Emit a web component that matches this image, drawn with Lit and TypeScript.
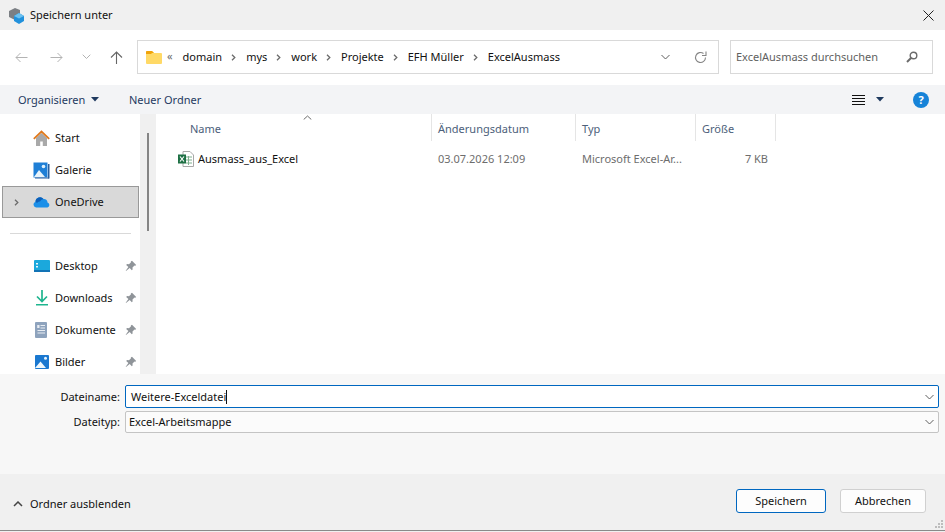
import { LitElement, html, css, svg } from "lit";
import { customElement } from "lit/decorators.js";

const pin = svg`<svg class="pin" width="12" height="12" viewBox="0 0 12 12"><path d="M7 .8l4.200 4.200-1 .7-.7-.2-2 2 .1 2-.8.8-2.100-2.300L1 11l-.3-.3 2.700-3.700L1.200 4.900l.8-.8 2 .1 2-2-.2-.7z" fill="#8f9499"/></svg>`;
const chev = svg`<svg width="9" height="9" viewBox="0 0 9 9"><path d="M3 1.800L5.800 4.500 3 7.200" fill="none" stroke="#6b6b6b" stroke-width="1.300"/></svg>`;
const down = svg`<svg width="9" height="6" viewBox="0 0 9 6"><path d="M.5 1l4 4 4-4" fill="none" stroke="#5f5f5f" stroke-width="1"/></svg>`;
const caret = svg`<svg width="8" height="5" viewBox="0 0 8 5"><path d="M0 0h8L4 4.500z" fill="#1f3a5f"/></svg>`;

const icons: Record<string, unknown> = {
  home: svg`<svg width="17" height="17" viewBox="0 0 17 17"><path d="M3 8v8h4.200v-4.500h2.600V16H14V8L8.500 3z" fill="#a9a9a9"/><path d="M.8 8.800L8.500 1.500l7.700 7.300" fill="none" stroke="#e0791c" stroke-width="1.800"/></svg>`,
  gal: svg`<svg width="17" height="17" viewBox="0 0 17 17"><rect x="0.500" y="0.500" width="14" height="15" fill="#1f7fd6"/><rect x="15" y="2" width="1.500" height="14.500" fill="#2a5f9e"/><rect x="2" y="15.500" width="14" height="1" fill="#2a5f9e"/><circle cx="10.500" cy="4.500" r="1.800" fill="#dff0fb"/><path d="M1 15l5-7 6 7z" fill="#e8f4fb"/></svg>`,
  cloud: svg`<svg width="17" height="12" viewBox="0 0 17 12"><path d="M3 11.500a3 3 0 0 1-.500-5.800A4.500 4.500 0 0 1 10.500 3a3.500 3.500 0 0 1 4 3.500 2.600 2.600 0 0 1 0 5z" fill="#1b8fe8"/><path d="M2.500 5.700A4.500 4.500 0 0 1 10.500 3 3.800 3.800 0 0 0 7 5.500 3 3 0 0 0 4 7z" fill="#0d5fb8"/></svg>`,
  desk: svg`<svg width="16" height="12" viewBox="0 0 16 12"><rect width="16" height="12" rx="1" fill="#1ba8dc"/><rect y="10" width="16" height="2" fill="#1273b5"/><rect x="2" y="3" width="2" height="1.500" fill="#e6f6fd"/><rect x="2" y="6" width="2" height="1.500" fill="#e6f6fd"/></svg>`,
  dl: svg`<svg width="14" height="16" viewBox="0 0 14 16"><path d="M7 0v11M2 6.500l5 5 5-5" fill="none" stroke="#1fb58f" stroke-width="1.700"/><rect x="1" y="14" width="12" height="1.500" fill="#1fb58f"/></svg>`,
  doc: svg`<svg width="13" height="16" viewBox="0 0 13 16"><rect width="12" height="16" rx="1" fill="#8ea3bd"/><path d="M5.500 3.500h4.500M5.500 6h4.500M2.500 8.500h7.500M2.500 11h7.500" stroke="#e8edf3" stroke-width="1"/><rect x="2.200" y="3" width="2.300" height="3" fill="#e8edf3"/></svg>`,
  pic: svg`<svg width="14" height="14" viewBox="0 0 14 14"><rect width="14" height="14" rx="1" fill="#1a78d0"/><circle cx="10.500" cy="3.200" r="1.500" fill="#e6f3fc"/><path d="M0 13l5.500-6.500L11 13z" fill="#eef7fc"/></svg>`,
};

const nav = [
  ["home", "Start"],
  ["gal", "Galerie"],
  ["cloud", "OneDrive"],
];
const quick = [
  ["desk", "Desktop"],
  ["dl", "Downloads"],
  ["doc", "Dokumente"],
  ["pic", "Bilder"],
];
const crumbs = ["domain", "mys", "work", "Projekte", "EFH Müller", "ExcelAusmass"];

@customElement("app-root")
export class AppRoot extends LitElement {
  static styles = css`
    :host {
      display: flex;
      flex-direction: column;
      width: 945px;
      height: 532px;
      overflow: hidden;
      background: #f0f0f0;
      font: 11px/16px "Noto Sans", sans-serif;
      color: #111;
      box-sizing: border-box;
    }
    svg { display: block; flex: none; }
    .title {
      height: 30px;
      flex: none;
      display: flex;
      align-items: center;
      background: #f0f0f0;
      padding: 0 11px 0 8px;
      gap: 5px;
    }
    .title .t { flex: 1; }
    .nav {
      height: 55px;
      flex: none;
      background: #fff;
      display: flex;
      align-items: center;
      padding: 0 13px 1px 15px;
      box-sizing: border-box;
    }
    .arrows {
      display: flex;
      align-items: center;
      width: 122px;
      flex: none;
    }
    .arrows .b1 { width: 35px; }
    .arrows .b2 { width: 32px; }
    .arrows .b3 { width: 28px; }
    .addr {
      flex: none;
      width: 582px;
      height: 34px;
      box-sizing: border-box;
      border: 1px solid #d9d9d9;
      display: flex;
      align-items: center;
      padding: 0 11px 0 8px;
      margin-right: 11px;
    }
    .crumbs { flex: 1; display: flex; align-items: center; }
    .crumbs .sep { margin: 0 8px 0 7px; }
    .lead { color: #6b6b6b; font-size: 11px; margin: -2px 11px 0 5px; letter-spacing: -1px; }
    .addr .refresh { margin-left: 24px; }
    .search {
      flex: none;
      width: 203px;
      height: 34px;
      box-sizing: border-box;
      border: 1px solid #d9d9d9;
      display: flex;
      align-items: center;
      justify-content: space-between;
      padding: 0 14px 0 5px;
      color: #5f5f5f;
    }
    .tools {
      height: 29px;
      flex: none;
      background: #f3f4f6;
      display: flex;
      align-items: center;
      padding: 0 16px 0 18px;
      color: #1f3a5f;
    }
    .org { display: flex; align-items: center; gap: 6px; width: 111px; }
    .tools .sp { flex: 1; }
    .views { display: flex; align-items: center; gap: 11px; margin-right: 29px; }
    .main {
      height: 260px;
      flex: none;
      display: flex;
      background: #fff;
      overflow: hidden;
    }
    .side {
      width: 140px;
      flex: none;
      padding: 8px 0 0 2px;
      box-sizing: border-box;
      overflow: hidden;
    }
    .item {
      height: 32px;
      width: 137px;
      box-sizing: border-box;
      display: flex;
      align-items: center;
      border: 1px solid transparent;
      padding-left: 30px;
      position: relative;
    }
    .item.sel { background: #d9d9d9; border-color: #999; padding-left: 9px; }
    .ic { width: 17px; margin-right: 5px; display: flex; justify-content: center; flex: none; }
    .item.sel .ic { margin-left: 12px; }
    .item .lbl { flex: 1; }
    .pin { margin-right: 1px; }
    .div { height: 1px; background: #d9d9d9; margin: 15px 8px 16px 8px; width: 121px; }
    .scroll {
      width: 16px;
      flex: none;
      background: #f0f0f0;
      padding: 19px 0 0 7px;
      box-sizing: border-box;
    }
    .thumb { width: 2px; height: 98px; background: #858585; }
    .files { flex: 1; position: relative; }
    .head { display: flex; height: 27px; color: #4c607a; }
    .col {
      box-sizing: border-box;
      border-right: 1px solid #e5e5e5;
      padding: 7px 0 0 6px;
      flex: none;
    }
    .c1 { width: 276px; padding-left: 34px; }
    .c2 { width: 144px; }
    .c3 { width: 120px; }
    .c4 { width: 80px; }
    .sort { position: absolute; left: 147px; top: 1px; }
    .row { display: flex; height: 22px; margin-top: 7px; align-items: center; color: #6d6d6d; }
    .row > div { box-sizing: border-box; padding-left: 6px; flex: none; white-space: nowrap; }
    .row .c1 { display: flex; align-items: center; gap: 4px; color: #111; padding-left: 22px; }
    .row .c4 { text-align: right; padding-right: 8px; }
    .form {
      height: 100px;
      flex: none;
      background: #f7f7f7;
      padding: 11px 6px 0 0;
      box-sizing: border-box;
    }
    .frow { display: flex; align-items: center; gap: 5px; margin-bottom: 3px; }
    .frow label { width: 120px; text-align: right; flex: none; }
    .inp {
      flex: 1;
      box-sizing: border-box;
      height: 23px;
      border: 1px solid #0067c0;
      border-radius: 2px;
      background: #fff;
      display: flex;
      align-items: center;
      justify-content: space-between;
      padding: 0 4px 0 5px;
    }
    .inp.sel { height: 22px; border-color: #c4c4c4; background: #fbfbfb; padding-left: 3px; }
    .cursor { display: inline-block; width: 1px; height: 14px; background: #111; vertical-align: -3px; }
    .foot {
      height: 57px;
      flex: none;
      background: #f0f0f0;
      display: flex;
      align-items: center;
      padding: 0 19px 2px 13px;
      border-bottom: 1px solid #8a8a8a;
      box-sizing: border-box;
      position: relative;
    }
    .hide { display: flex; align-items: center; gap: 7px; flex: 1; padding-top: 5px; }
    .btn {
      box-sizing: border-box;
      height: 24px;
      border-radius: 3px;
      background: #fdfdfd;
      border: 1px solid #d0d0d0;
      display: flex;
      align-items: center;
      justify-content: center;
    }
    .save { width: 90px; border-color: #0067c0; margin-right: 14px; background: #fdfdfd; }
    .cancel { width: 86px; }
    .grip { position: absolute; right: 1px; bottom: 1px; }
  `;

  render() {
    return html`
      <div class="title">
        <svg width="17" height="17" viewBox="0 0 17 17">
          <path d="M1 4l6-3 5 2v7l-5 3-6-3z" fill="#7b7f84"/>
          <path d="M6 9l5-3 5 3v5l-5 3-5-3z" fill="#2191dc"/>
          <path d="M6 9l5-3 5 3-5 2.500z" fill="#6cc1f0"/>
        </svg>
        <div class="t">Speichern unter</div>
        <svg width="11" height="11" viewBox="0 0 11 11"><path d="M.5.500l10 10M10.500.500l-10 10" stroke="#222" stroke-width="1"/></svg>
      </div>

      <div class="nav">
        <div class="arrows">
          <div class="b1"><svg width="13" height="11" viewBox="0 0 13 11"><path d="M12.500 5.500H1M5.500 1L1 5.500 5.500 10" fill="none" stroke="#b3b3b3"/></svg></div>
          <div class="b2"><svg width="13" height="11" viewBox="0 0 13 11"><path d="M.5 5.500H12M7.500 1L12 5.500 7.500 10" fill="none" stroke="#b3b3b3"/></svg></div>
          <div class="b3"><svg width="9" height="6" viewBox="0 0 9 6"><path d="M.7.700L4.500 4.500 8.300.700" fill="none" stroke="#b3b3b3"/></svg></div>
          <div><svg width="13" height="13" viewBox="0 0 13 13"><path d="M6.500 13V1M1 6.500L6.500 1 12 6.500" fill="none" stroke="#666" stroke-width="1.100"/></svg></div>
        </div>
        <div class="addr">
          <svg width="16" height="13" viewBox="0 0 16 13"><path d="M0 1a1 1 0 0 1 1-1h5l2 2h7a1 1 0 0 1 1 1v9a1 1 0 0 1-1 1H1a1 1 0 0 1-1-1z" fill="#ffd966"/><path d="M0 1a1 1 0 0 1 1-1h5l2 2H6L5 3H0z" fill="#f0a30a"/></svg>
          <span class="lead">«</span>
          <div class="crumbs">
            ${crumbs.map((c, i) => html`<span>${c}</span>${i < crumbs.length - 1 ? html`<span class="sep">${chev}</span>` : ""}`)}
          </div>
          ${down}
          <div class="refresh"><svg width="13" height="13" viewBox="0 0 13 13"><path d="M11.500 6.500A5 5 0 1 1 9.500 2.500" fill="none" stroke="#858585" stroke-width="1.100"/><path d="M12 .5v4H8" fill="none" stroke="#858585" stroke-width="1.100"/></svg></div>
        </div>
        <div class="search">
          <span>ExcelAusmass durchsuchen</span>
          <svg width="12" height="12" viewBox="0 0 12 12"><circle cx="7.500" cy="4.500" r="3.300" fill="none" stroke="#6b6b6b" stroke-width="1.400"/><path d="M5 7L1 11" stroke="#6b6b6b" stroke-width="2"/></svg>
        </div>
      </div>

      <div class="tools">
        <div class="org"><span>Organisieren</span>${caret}</div>
        <div>Neuer Ordner</div>
        <div class="sp"></div>
        <div class="views">
          <svg width="13" height="11" viewBox="0 0 13 11"><path d="M0 1.500h13M0 4.500h13M0 7.500h13M0 10.500h13" stroke="#111" stroke-width="1"/></svg>
          ${caret}
        </div>
        <svg width="16" height="16" viewBox="0 0 16 16"><circle cx="8" cy="8" r="8" fill="#1683d8"/><text x="8" y="12" text-anchor="middle" font-family="Noto Sans" font-weight="700" font-size="11" fill="#fff">?</text></svg>
      </div>

      <div class="main">
        <div class="side">
          ${nav.map(([ic, l], i) => html`
            <div class="item ${i === 2 ? "sel" : ""}">
              ${i === 2 ? chev : ""}
              <span class="ic">${icons[ic]}</span><span class="lbl">${l}</span>
            </div>`)}
          <div class="div"></div>
          ${quick.map(([ic, l]) => html`
            <div class="item"><span class="ic">${icons[ic]}</span><span class="lbl">${l}</span>${pin}</div>`)}
        </div>
        <div class="scroll"><div class="thumb"></div></div>
        <div class="files">
          <svg class="sort" width="9" height="5" viewBox="0 0 9 5"><path d="M.7 4.500L4.500 1 8.300 4.500" fill="none" stroke="#6b6b6b"/></svg>
          <div class="head">
            <div class="col c1">Name</div>
            <div class="col c2">Änderungsdatum</div>
            <div class="col c3">Typ</div>
            <div class="col c4">Größe</div>
          </div>
          <div class="row">
            <div class="c1">
              <svg width="16" height="16" viewBox="0 0 16 16">
                <path d="M5 .5h7l3.500 3.500v11.500H5z" fill="#fff" stroke="#a8a8a8"/>
                <path d="M8 6h6M8 9h6M8 12h6M10.500 5v9" stroke="#7fb08f"/>
                <rect y="3.500" width="8" height="9" fill="#1d7044"/>
                <path d="M2 5.500l4 5M6 5.500l-4 5" stroke="#fff" stroke-width="1.200"/>
              </svg>
              <span>Ausmass_aus_Excel</span>
            </div>
            <div class="c2">03.07.2026 12:09</div>
            <div class="c3">Microsoft Excel-Ar...</div>
            <div class="c4">7 KB</div>
          </div>
        </div>
      </div>

      <div class="form">
        <div class="frow">
          <label>Dateiname:</label>
          <div class="inp"><span>Weitere-Exceldatei<span class="cursor"></span></span>${down}</div>
        </div>
        <div class="frow">
          <label>Dateityp:</label>
          <div class="inp sel"><span>Excel-Arbeitsmappe</span>${down}</div>
        </div>
      </div>

      <div class="foot">
        <div class="hide">
          <svg width="10" height="6" viewBox="0 0 10 6"><path d="M1 5l4-4 4 4" fill="none" stroke="#444" stroke-width="1.500"/></svg>
          <span>Ordner ausblenden</span>
        </div>
        <div class="btn save">Speichern</div>
        <div class="btn cancel">Abbrechen</div>
        <svg class="grip" width="10" height="10" viewBox="0 0 10 10"><path d="M7 1h2v2H7zM4 4h2v2H4zM7 4h2v2H7zM1 7h2v2H1zM4 7h2v2H4zM7 7h2v2H7z" fill="#bdbdbd"/></svg>
      </div>
    `;
  }
}
